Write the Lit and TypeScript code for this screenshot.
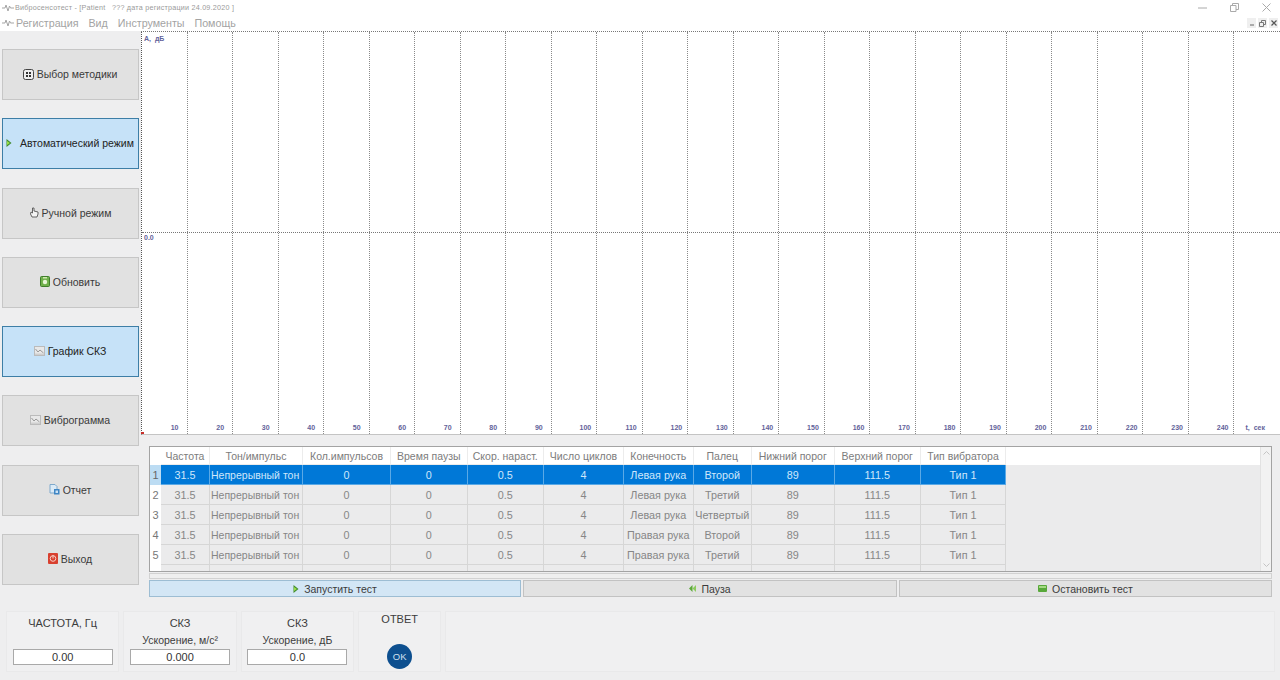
import { LitElement, html, css, svg } from "lit";
import { customElement } from "lit/decorators.js";

const heads = ["Частота","Тон/импульс","Кол.импульсов","Время паузы","Скор. нараст.","Число циклов","Конечность","Палец","Нижний порог","Верхний порог","Тип вибратора"];
const rows = [
  ["Левая рука","Второй"],["Левая рука","Третий"],["Левая рука","Четвертый"],
  ["Правая рука","Второй"],["Правая рука","Третий"],["Правая рука","Четвертый"],
];
const wave = svg`<svg class="wave" width="12" height="8" viewBox="0 0 12 8"><path d="M0 4h3l1-3 2 6 1.500-5 1 2h3.500" fill="none" stroke="#a5a5a5" stroke-width="1"/></svg>`;

const icons: Record<string, unknown> = {
  grid: svg`<svg width="11" height="11" viewBox="0 0 11 11"><rect x=".5" y=".5" width="10" height="10" rx="2" fill="#eee" stroke="#444"/><rect x="3" y="3" width="2" height="2" fill="#333"/><rect x="6" y="3" width="2" height="2" fill="#333"/><rect x="3" y="6" width="2" height="2" fill="#333"/><rect x="6" y="6" width="2" height="2" fill="#333"/></svg>`,
  play: svg`<svg width="6" height="8" viewBox="0 0 6 8"><path d="M.5 0l5 4-5 4z" fill="#3f8a2c"/><path d="M1 2l3 2-3 2z" fill="#9be04a"/></svg>`,
  hand: svg`<svg width="10" height="11" viewBox="0 0 10 11"><path d="M3.500 1v5L2 5 1.500 7 3 10h5l1-3V5L5 4V1z" fill="#f4f4f4" stroke="#555" stroke-width=".9"/></svg>`,
  refresh: svg`<svg width="10" height="11" viewBox="0 0 10 11"><rect x=".5" y=".5" width="9" height="10" rx="1" fill="#6fb04a" stroke="#3e7d2a"/><circle cx="5" cy="6" r="2.200" fill="#e8f5d8"/><rect x="3" y="1" width="4" height="1.500" fill="#cfe8b0"/></svg>`,
  chart: svg`<svg width="11" height="10" viewBox="0 0 11 10"><rect x=".5" y=".5" width="10" height="9" fill="#e8e8e8" stroke="#bbb"/><path d="M1.500 3l2.500 3 2-2 3.500 3" fill="none" stroke="#999"/><rect x="1" y="7.500" width="9" height="1.500" fill="#cfcfcf"/></svg>`,
  report: svg`<svg width="11" height="11" viewBox="0 0 11 11"><path d="M1 .5h5l2 2V9H1z" fill="#dcebf7" stroke="#7ea9cc"/><rect x="5" y="5" width="5.500" height="5.500" fill="#3f86c4"/><rect x="6.500" y="6.500" width="2.500" height="2.500" fill="#cfe3f5"/></svg>`,
  exit: svg`<svg width="10" height="11" viewBox="0 0 10 11"><rect width="10" height="11" rx="1" fill="#d8402f"/><circle cx="5" cy="5.500" r="2.800" fill="none" stroke="#f7d0c8"/><path d="M5 2v3.500" stroke="#f7d0c8"/></svg>`,
  pause: svg`<svg width="7" height="7" viewBox="0 0 7 7"><path d="M3.500 0v7L0 3.500z" fill="#5ca83a"/><path d="M7 0v7L3.500 3.500z" fill="#8ccb5e"/></svg>`,
  stop: svg`<svg width="9" height="7" viewBox="0 0 9 7"><rect width="9" height="7" rx="1" fill="#58a83a"/><rect x="1" y="1" width="7" height="2" fill="#a4d982"/></svg>`,
};

@customElement("app-root")
export class AppRoot extends LitElement {
  static styles = css`
    :host { display: block; width: 1280px; height: 680px; overflow: hidden; background: #eeeeef;
      font-family: "Liberation Sans", Arial, sans-serif; color: #333; }
    .title { height: 15px; display: flex; align-items: center; background: #fff; font-size: 7.200px; color: #9a9a9a; padding-left: 2px; gap: 1px; }
    .title span { flex: 1; white-space: pre; letter-spacing: .22px; }
    .winbtns { display: flex; color: #999; align-items: center; }
    .winbtns svg { display: block; margin-right: 23px; }
    .menu { height: 16px; display: flex; align-items: center; background: #fff; font-size: 10.700px; color: #a3a3a3; padding-left: 2px; }
    .menu .wave { margin-right: 2px; }
    .menu .it { margin-right: 10px; }
    .menu .sp { flex: 1; }
    .mdi { width: 9px; height: 10px; margin-right: 2px; background: #efefef; color: #777; display: flex; align-items: center; justify-content: center; }
    .main { display: flex; height: 574px; }
    .side { width: 137px; margin: 0 2px; padding-top: 18px; display: flex; flex-direction: column; justify-content: space-between; height: 536px; flex: none; }
    .btn { height: 51px; box-sizing: border-box; background: #e1e1e1; border: 1px solid #c6c6c6; display: flex; align-items: center; justify-content: center; gap: 3px; font-size: 10.500px; color: #3a3a3a; padding: 0 1px 1px 0; white-space: nowrap; }
    .btn.on { background: #c6e2f8; border-color: #3d7ea6; color: #222; }
    .btn.auto { gap: 8px; justify-content: flex-start; padding-left: 3px; }
    .right { flex: 1; min-width: 0; }
    .chart { position: relative; height: 404px; background: #fff; border-top: 1px dotted #777; border-left: 1px dotted #555; border-bottom: 1px solid #c4c4c4; box-sizing: border-box; display: grid; grid-template-columns: repeat(25, 1fr); }
    .col { border-right: 1px dotted #8a8a8a; display: flex; align-items: flex-end; justify-content: flex-end; padding: 0 8px 3px 0; font-size: 7px; font-weight: bold; color: #62629a; min-width: 0; }
    .col.wide { padding-right: 5px; }
    .col.last { border-right: 0; padding-right: 15px; white-space: pre; }
    .mid { position: absolute; left: 0; right: 0; top: 200px; border-top: 1px dotted #777; }
    .lab { position: absolute; left: 2px; font-size: 7px; font-weight: bold; color: #62629a; white-space: pre; }
    .lab.a { top: 3px; } .lab.z { top: 202px; }
    .corner { position: absolute; left: -1px; bottom: 0; width: 3px; height: 2px; background: #c9302c; }
    .lower { padding: 11px 8px 0 8px; }
    .table { height: 126px; box-sizing: border-box; border: 1px solid #a3a3a3; display: flex; background: #ebebec; }
    .body { flex: 1; min-width: 0; overflow: hidden; }
    .row { display: grid; height: 20px; grid-template-columns: 11px 49px 93px 88px 76.500px 76.500px 80px 69.500px 58.500px 82.500px 86.500px 85px; font-size: 10.800px; color: #868686; }
    .row > div { display: flex; align-items: center; justify-content: center; box-sizing: border-box; border-right: 1px solid #d6d6d6; border-bottom: 1px solid #d6d6d6; white-space: nowrap; overflow: hidden; }
    .row > .left { justify-content: flex-start; padding-left: 1px; font-size: 10.500px; }
    .row > .n { border: 0; background: #fff; font-size: 11px; color: #777; }
    .head { height: 18px; background: #fff; color: #7c7c7c; font-size: 10.500px; }
    .head > div { border-color: #ececec; }
    .sel > div { background: #0078d7; color: #cfe7fb; border-color: #5aa9e6; }
    .sel > .n { background: #bcdcf3; color: #666; }
    .scroll { width: 11px; background: #f2f2f2; border-left: 1px solid #e2e2e2; display: flex; flex-direction: column; justify-content: space-between; align-items: center; padding: 4px 0; box-sizing: border-box; }
    .hbar { height: 6px; margin-top: 1px; border: 1px solid #d2d2d2; background: #efefef; box-sizing: border-box; }
    .actions { display: grid; grid-template-columns: 372px 374px 373px; gap: 2px; margin-top: 1px; }
    .act { height: 17px; box-sizing: border-box; border: 1px solid #c2c2c2; background: #e2e2e2; display: flex; align-items: center; justify-content: center; gap: 5px; font-size: 10.500px; color: #3b3b3b; }
    .act.on { background: #d3e6f5; border-color: #9dbdd3; }
    .bottom { display: flex; gap: 4px; padding: 6px 5px 0 6px; height: 61px; }
    .panel { background: #f0f0f1; border: 1px solid #e9e9ea; box-sizing: border-box; height: 61px; width: 113.400px; display: flex; flex-direction: column; align-items: center; font-size: 11px; color: #3c3c3c; flex: none; }
    .panel.ans { width: 83px; }
    .panel.fill { flex: 1; }
    .t1 { margin-top: 3px; height: 17px; line-height: 17px; }
    .t2 { height: 15px; line-height: 15px; font-size: 10.500px; margin-top: 1px; }
    .val { margin-top: auto; margin-bottom: 6px; width: 100px; height: 16px; box-sizing: border-box; background: #fff; border: 1px solid #a9a9a9; text-align: center; font-size: 11px; line-height: 15px; color: #333; }
    .ans .t1 { margin-top: -1px; }
    .ok { margin-top: auto; margin-bottom: 2px; width: 25px; height: 25px; border-radius: 50%; background: #0d4f8f; color: #cfe0f0; font-size: 9.500px; display: flex; align-items: center; justify-content: center; }
  `;

  private cols() {
    const out = [];
    for (let i = 1; i <= 24; i++) out.push(html`<div class="col ${i >= 10 ? "wide" : ""}">${i * 10}</div>`);
    out.push(html`<div class="col last">t,  сек</div>`);
    return out;
  }

  private btn(icon: string, label: string, cls = "") {
    return html`<div class="btn ${cls}">${icons[icon]}<span>${label}</span></div>`;
  }

  render() {
    return html`
      <div class="title">${wave}<span>Вибросенсотест - [Patient   ??? дата регистрации 24.09.2020 ]</span>
        <div class="winbtns">
          <svg width="9" height="9" viewBox="0 0 9 9"><path d="M0 5h9" stroke="#aaa"/></svg>
          <svg width="9" height="9" viewBox="0 0 9 9"><path d="M.5 2.500h5.500v6H.5zM2.500 2.500V.5h6v6H6" fill="none" stroke="#aaa"/></svg>
          <svg style="margin-right:9px" width="9" height="9" viewBox="0 0 9 9"><path d="M.5.5l8 8M8.500.5l-8 8" stroke="#aaa"/></svg>
        </div>
      </div>
      <div class="menu">${wave}
        <span class="it">Регистрация</span><span class="it">Вид</span><span class="it">Инструменты</span><span class="it">Помощь</span>
        <span class="sp"></span>
        <div class="mdi"><svg width="6" height="6" viewBox="0 0 6 6"><path d="M1 5h4" stroke="#666"/></svg></div>
        <div class="mdi"><svg width="7" height="7" viewBox="0 0 7 7"><path d="M.5 2.500h4v4h-4zM2.500 2.500v-2h4v4h-2" fill="none" stroke="#777"/></svg></div>
        <div class="mdi"><svg width="6" height="6" viewBox="0 0 6 6"><path d="M.5.500l5 5M5.500.5l-5 5" stroke="#555" stroke-width="1.200"/></svg></div>
      </div>
      <div class="main">
        <div class="side">
          ${this.btn("grid", "Выбор методики")}
          ${this.btn("play", "Автоматический режим", "on auto")}
          ${this.btn("hand", "Ручной режим")}
          ${this.btn("refresh", "Обновить")}
          ${this.btn("chart", "График СКЗ", "on")}
          ${this.btn("chart", "Виброграмма")}
          ${this.btn("report", "Отчет")}
          ${this.btn("exit", "Выход")}
        </div>
        <div class="right">
          <div class="chart">
            ${this.cols()}
            <div class="mid"></div>
            <div class="lab a">A,  дБ</div>
            <div class="lab z">0.0</div>
            <div class="corner"></div>
          </div>
          <div class="lower">
            <div class="table">
              <div class="body">
                <div class="row head"><div class="n"></div>${heads.map((h) => html`<div>${h}</div>`)}</div>
                ${rows.map((r, i) => html`
                  <div class="row ${i === 0 ? "sel" : ""}">
                    <div class="n">${i + 1}</div><div>31.5</div><div class="left">Непрерывный тон</div>
                    <div>0</div><div>0</div><div>0.5</div><div>4</div>
                    <div>${r[0]}</div><div>${r[1]}</div><div>89</div><div>111.5</div><div>Тип 1</div>
                  </div>`)}
              </div>
              <div class="scroll">
                <svg width="7" height="4" viewBox="0 0 7 4"><path d="M.5 3.500l3-3 3 3" fill="none" stroke="#c4c4c4"/></svg>
                <svg width="7" height="4" viewBox="0 0 7 4"><path d="M.5.500l3 3 3-3" fill="none" stroke="#c4c4c4"/></svg>
              </div>
            </div>
            <div class="hbar"></div>
            <div class="actions">
              <div class="act on">${icons.play}<span>Запустить тест</span></div>
              <div class="act">${icons.pause}<span>Пауза</span></div>
              <div class="act">${icons.stop}<span>Остановить тест</span></div>
            </div>
          </div>
        </div>
      </div>
      <div class="bottom">
        <div class="panel"><div class="t1">ЧАСТОТА, Гц</div><div class="val">0.00</div></div>
        <div class="panel"><div class="t1">СКЗ</div><div class="t2">Ускорение, м/с²</div><div class="val">0.000</div></div>
        <div class="panel"><div class="t1">СКЗ</div><div class="t2">Ускорение, дБ</div><div class="val">0.0</div></div>
        <div class="panel ans"><div class="t1">ОТВЕТ</div><div class="ok">OK</div></div>
        <div class="panel fill"></div>
      </div>
    `;
  }
}
